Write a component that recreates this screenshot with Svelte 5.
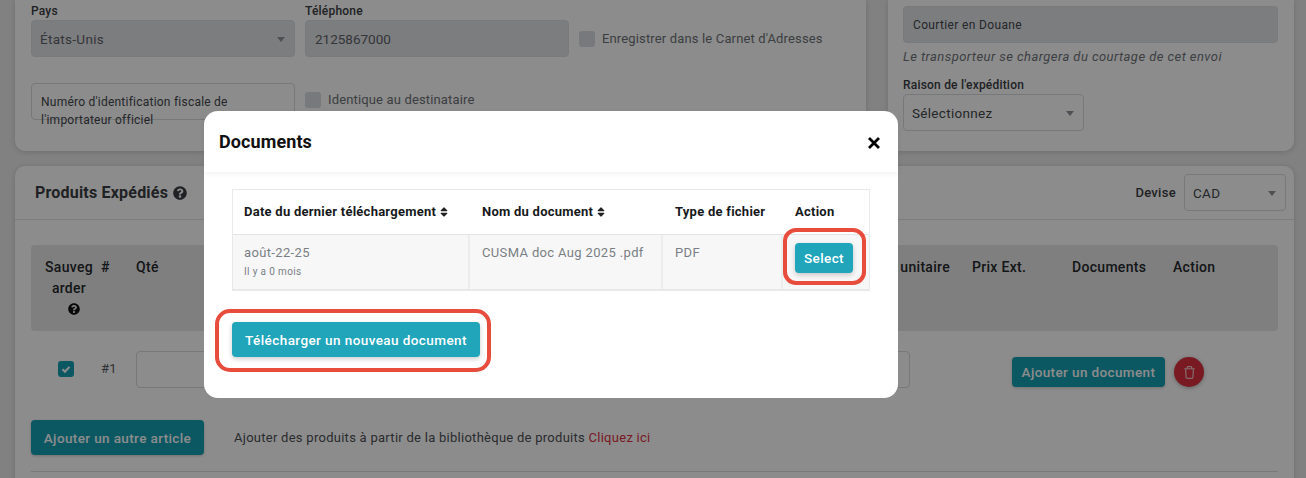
<script>
	const helpPath = 'M504 256c0 136.997-111.043 248-248 248S8 392.997 8 256C8 119.083 119.043 8 256 8s248 111.083 248 248zM262.655 90c-54.497 0-89.255 22.957-116.549 63.758-3.536 5.286-2.353 12.415 2.715 16.258l34.699 26.31c5.205 3.947 12.621 3.008 16.665-2.122 17.864-22.658 30.113-35.797 57.303-35.797 20.429 0 45.698 13.148 45.698 32.958 0 14.976-12.363 22.667-32.534 33.976C247.128 238.528 216 254.941 216 296v4c0 6.627 5.373 12 12 12h56c6.627 0 12-5.373 12-12v-1.333c0-28.462 83.186-29.647 83.186-106.667 0-58.002-60.165-102-116.531-102zM256 338c-25.365 0-46 20.635-46 46 0 25.364 20.635 46 46 46s46-20.636 46-46c0-25.365-20.635-46-46-46z';
	const sortPath = 'M41 288h238c21.4 0 32.1 25.9 17 41L177 448c-9.4 9.4-24.6 9.4-33.9 0L24 329c-15.1-15.1-4.4-41 17-41zm255-105L177 64c-9.4-9.4-24.6-9.4-33.9 0L24 183c-15.1 15.1-4.4 41 17 41h238c21.4 0 32.1-25.9 17-41z';
</script>

<div class="page">
	<div class="top-row">
		<section class="card ship-card">
			<div class="field-row first">
				<div class="field w264">
					<span class="label">Pays</span>
					<div class="select filled">États-Unis<i class="caret"></i></div>
				</div>
				<div class="field w264">
					<span class="label">Téléphone</span>
					<div class="input filled phone">2125867000</div>
				</div>
				<label class="check muted"><span class="box"></span>Enregistrer dans le Carnet d'Adresses</label>
			</div>
			<div class="field-row second">
				<div class="tax-input">Numéro d'identification fiscale de l'importateur officiel</div>
				<label class="check muted same"><span class="box"></span>Identique au destinataire</label>
			</div>
		</section>

		<section class="card broker-card">
			<div class="input filled small">Courtier en Douane</div>
			<p class="note">Le transporteur se chargera du courtage de cet envoi</p>
			<span class="label">Raison de l'expédition</span>
			<div class="select reason">Sélectionnez<i class="caret"></i></div>
		</section>
	</div>

	<section class="card products">
		<header class="products-head">
			<h2>Produits Expédiés
				<svg class="help" viewBox="0 0 512 512"><path d={helpPath} /></svg>
			</h2>
			<span class="devise">Devise</span>
			<div class="select currency">CAD<i class="caret"></i></div>
		</header>

		<div class="products-body">
			<div class="table-head">
				<div class="save-col">Sauvegarder
					<svg class="help small" viewBox="0 0 512 512"><path d={helpPath} /></svg>
				</div>
				<div>#</div>
				<div class="qty-col"><span>Qté</span><span>Prix unitaire</span></div>
				<div>Prix Ext.</div>
				<div>Documents</div>
				<div>Action</div>
			</div>

			<div class="item-row">
				<span class="tick">
					<svg viewBox="0 0 12 12"><path d="M3.4 6.2l1.8 1.8 3.4-3.6" /></svg>
				</span>
				<span class="num">#1</span>
				<div class="qty-input"></div>
				<button class="btn dark doc-btn" type="button">Ajouter un document</button>
				<button class="trash" type="button" aria-label="Supprimer">
					<svg viewBox="0 0 16 16"><path d="M2.4 4h11.2M5.6 4V2.6c0-.5.4-.9.9-.9h3c.5 0 .9.4.9.9V4M3.8 4l.6 9c0 .8.6 1.3 1.3 1.3h4.6c.7 0 1.3-.5 1.3-1.3l.6-9" /></svg>
				</button>
			</div>

			<div class="add-row">
				<button class="btn dark add-btn" type="button">Ajouter un autre article</button>
				<span class="add-text">Ajouter des produits à partir de la bibliothèque de produits <a href="#top">Cliquez ici</a></span>
			</div>
			<div class="rule"></div>
		</div>
	</section>

	<div class="backdrop">
		<div class="modal">
			<header class="modal-head">
				<h3>Documents</h3>
				<svg class="close" viewBox="0 0 14 14"><path d="M2 2l10 10M12 2L2 12" /></svg>
			</header>
			<div class="modal-body">
				<div class="doc-table">
					<div class="th first-col">Date du dernier téléchargement
						<svg class="sort" viewBox="0 0 320 512"><path d={sortPath} /></svg>
					</div>
					<div class="th">Nom du document
						<svg class="sort" viewBox="0 0 320 512"><path d={sortPath} /></svg>
					</div>
					<div class="th">Type de fichier</div>
					<div class="th">Action</div>
					<div class="td first-col">août-22-25<small>Il y a 0 mois</small></div>
					<div class="td">CUSMA doc Aug 2025 .pdf</div>
					<div class="td">PDF</div>
					<div class="td action"><button class="btn marked select-btn" type="button">Select</button></div>
				</div>
				<button class="btn marked upload-btn" type="button">Télécharger un nouveau document</button>
			</div>
		</div>
	</div>
</div>

<style>
	:global(body) {
		margin: 0;
	}
	.page {
		position: relative;
		height: 478px;
		overflow: hidden;
		background: #ececed;
		font-family: Roboto, "Liberation Sans", sans-serif;
		color: #333;
		padding: 0 12px 0 15px;
		box-sizing: border-box;
	}
	.top-row {
		display: flex;
		gap: 22px;
		height: 151px;
	}
	.card {
		background: #fff;
		border-radius: 10px;
		box-shadow: 0 1px 6px rgba(0, 0, 0, 0.16);
	}
	.ship-card {
		width: 851px;
		border-radius: 0 0 10px 10px;
		padding: 0 16px;
		box-sizing: border-box;
	}
	.broker-card {
		flex: 1;
		border-radius: 0 0 10px 10px;
		padding: 6px 16px 0 15px;
		box-sizing: border-box;
	}
	.field-row {
		display: flex;
		gap: 10px;
	}
	.first {
		padding-top: 4px;
	}
	.second {
		margin-top: 26px;
	}
	.field {
		display: flex;
		flex-direction: column;
	}
	.w264 {
		width: 264px;
	}
	.label {
		display: block;
		font-size: 12px;
		font-weight: 500;
		line-height: 15px;
		letter-spacing: 0.2px;
		color: #3a3d42;
		margin-bottom: 1px;
	}
	.input,
	.select {
		position: relative;
		height: 37px;
		line-height: 36px;
		border: 1px solid #d9dbde;
		border-radius: 4px;
		box-sizing: border-box;
		padding: 0 8px;
		font-size: 13.5px;
		letter-spacing: 0.3px;
		color: #43474c;
	}
	.filled {
		background: #e2e4e8;
		border-color: #dcdee2;
		color: #5f6368;
	}
	.phone {
		padding-left: 9px;
		letter-spacing: 0;
	}
	.small {
		font-size: 12px;
		letter-spacing: 0.35px;
		padding-left: 9px;
		color: #43474c;
	}
	.caret {
		position: absolute;
		right: 9px;
		top: 16px;
		border: 4px solid transparent;
		border-top: 5px solid #8f9297;
		border-bottom: 0;
	}
	.check {
		display: flex;
		align-items: center;
		gap: 7px;
		font-size: 13px;
		letter-spacing: 0.15px;
		height: 37px;
		margin-top: 16px;
	}
	.muted {
		color: #6e7277;
	}
	.check .box {
		width: 16px;
		height: 16px;
		border-radius: 3px;
		background: #dadde2;
	}
	.same {
		margin-top: -2px;
	}
	.tax-input {
		width: 264px;
		height: 37px;
		border: 1px solid #d9dbde;
		border-radius: 4px;
		box-sizing: border-box;
		padding: 9px 9px 0;
		font-size: 12px;
		line-height: 18px;
		letter-spacing: 0.23px;
		color: #43474c;
	}
	.note {
		margin: 6px 0 13px;
		font-size: 13px;
		line-height: 16px;
		font-style: italic;
		letter-spacing: 0.44px;
		color: #70747a;
	}
	.reason {
		width: 181px;
	}
	.products {
		margin-top: 15px;
		height: 340px;
	}
	.products-head {
		display: flex;
		align-items: center;
		height: 54px;
		padding: 0 8px 0 20px;
		border-bottom: 1px solid #e3e4e6;
		box-sizing: border-box;
	}
	.products-head h2 {
		margin: 0 auto 0 0;
		font-size: 16px;
		font-weight: 700;
		letter-spacing: 0.2px;
		color: #3a3d42;
		display: flex;
		align-items: center;
		gap: 5px;
	}
	.help {
		width: 14px;
		height: 14px;
		fill: #3a3d42;
	}
	.help.small {
		display: block;
		width: 12px;
		height: 12px;
		margin: 4px auto 0;
		fill: #111;
	}
	.devise {
		font-size: 13px;
		font-weight: 500;
		letter-spacing: 0.3px;
		margin-right: 8px;
		color: #3a3d42;
	}
	.currency {
		width: 102px;
	}
	.products-body {
		padding: 25px 16px 0;
	}
	.table-head {
		display: grid;
		grid-template-columns: 56px 35px 1fr 100px 101px 105px;
		height: 86px;
		padding: 12px 0 0 14px;
		box-sizing: border-box;
		background: #e7e8ea;
		border-radius: 4px;
		font-size: 14px;
		font-weight: 500;
		line-height: 21px;
		letter-spacing: 0.3px;
		color: #26282b;
	}
	.save-col {
		width: 48px;
		text-align: center;
		word-break: break-all;
	}
	.qty-col {
		display: flex;
		justify-content: space-between;
		padding-right: 22px;
	}
	.item-row {
		display: flex;
		align-items: center;
		height: 37px;
		margin-top: 20px;
		padding-left: 27px;
	}
	.tick {
		display: flex;
		width: 16px;
		height: 16px;
		margin-top: -1px;
		border-radius: 3px;
		background: #14a0b5;
		margin-right: 27px;
	}
	.tick svg {
		fill: none;
		stroke: #fff;
		stroke-width: 1.6;
	}
	.num {
		width: 35px;
		margin-top: -2px;
		font-size: 13px;
		color: #55595e;
		letter-spacing: 0.3px;
	}
	.qty-input {
		flex: 1;
		height: 37px;
		border: 1px solid #d9dbde;
		border-radius: 4px;
		box-sizing: border-box;
		margin-right: 102px;
	}
	.btn {
		border: 0;
		border-radius: 4px;
		font-family: inherit;
		font-weight: 500;
		letter-spacing: 0.38px;
		color: #fff;
		padding: 0;
	}
	.dark {
		background: #14a0b5;
		box-shadow: 0 1px 3px rgba(0, 0, 0, 0.2);
	}
	.doc-btn {
		width: 153px;
		height: 30px;
		font-size: 13.5px;
		margin-top: 5px;
	}
	.trash {
		display: flex;
		align-items: center;
		justify-content: center;
		width: 30px;
		height: 30px;
		margin: 5px 74px 0 9px;
		border: 0;
		padding: 0;
		border-radius: 50%;
		background: #dc2f3e;
		box-shadow: 0 1px 4px rgba(0, 0, 0, 0.3);
	}
	.trash svg {
		width: 15px;
		height: 15px;
		fill: none;
		stroke: #f3c4c8;
		stroke-width: 1.3;
	}
	.add-row {
		display: flex;
		align-items: center;
		margin-top: 32px;
	}
	.add-btn {
		width: 173px;
		height: 35px;
		font-size: 13.5px;
		margin-right: 30px;
	}
	.add-text {
		font-size: 13px;
		letter-spacing: 0.27px;
		color: #4c5055;
	}
	.add-text a {
		color: #dc2f3e;
		text-decoration: none;
	}
	.rule {
		height: 1px;
		background: #dcdde0;
		margin-top: 16px;
	}
	.backdrop {
		position: absolute;
		inset: 0;
		background: rgba(0, 0, 0, 0.45);
	}
	.modal {
		position: absolute;
		left: 204px;
		top: 111px;
		width: 694px;
		height: 287px;
		background: #fff;
		border-radius: 14px;
	}
	.modal-head {
		display: flex;
		align-items: center;
		justify-content: space-between;
		height: 61px;
		padding: 0 17px 0 15px;
		box-sizing: border-box;
		box-shadow: 0 2px 6px rgba(0, 0, 0, 0.06);
	}
	.modal-head h3 {
		margin: 0 0 1px;
		font-size: 18px;
		font-weight: 700;
		letter-spacing: 0.1px;
		color: #111;
	}
	.close {
		width: 14px;
		height: 14px;
		fill: none;
		stroke: #000;
		stroke-width: 2.8;
		margin-top: 2px;
	}
	.modal-body {
		padding: 17px 28px 0;
	}
	.doc-table {
		display: grid;
		grid-template-columns: 237px 193px 120px 86px;
		border: 1px solid #e8e9eb;
		border-width: 1px 1px 2px 1px;
		box-sizing: border-box;
		width: 638px;
	}
	.th {
		display: flex;
		align-items: center;
		gap: 4px;
		height: 45px;
		padding: 0 0 1px 12px;
		box-sizing: border-box;
		border-bottom: 1px solid #e3e4e7;
		font-size: 13px;
		font-weight: 700;
		letter-spacing: 0.25px;
		color: #17191c;
	}
	.sort {
		width: 8px;
		height: 12px;
		fill: #222;
	}
	.td {
		height: 54px;
		padding: 9px 0 0 12px;
		box-sizing: border-box;
		background: #f7f7f8;
		border-right: 2px solid #eceded;
		font-size: 13px;
		line-height: 17px;
		letter-spacing: 0.35px;
		color: #7a7f85;
	}
	.td.first-col,
	.th.first-col {
		padding-left: 11px;
	}
	.td small {
		display: block;
		margin-top: 4px;
		font-size: 10px;
		line-height: 14px;
	}
	.td.action {
		border-right: 0;
		padding: 8px 0 0 12px;
	}
	.marked {
		position: relative;
		background: #20a5bb;
		box-shadow: 0 2px 5px rgba(0, 0, 0, 0.2);
	}
	.marked::after {
		content: '';
		position: absolute;
		border: 4px solid #e74c3c;
		border-radius: 13px;
	}
	.select-btn {
		width: 58px;
		height: 30px;
		font-size: 13.5px;
	}
	.select-btn::after {
		inset: -15px -13px -12px -12px;
	}
	.upload-btn {
		display: block;
		width: 248px;
		height: 35px;
		margin-top: 31px;
		font-size: 13.5px;
		letter-spacing: 0.42px;
	}
	.upload-btn::after {
		inset: -13px -11px -15px -17px;
		border-radius: 15px;
	}
</style>
